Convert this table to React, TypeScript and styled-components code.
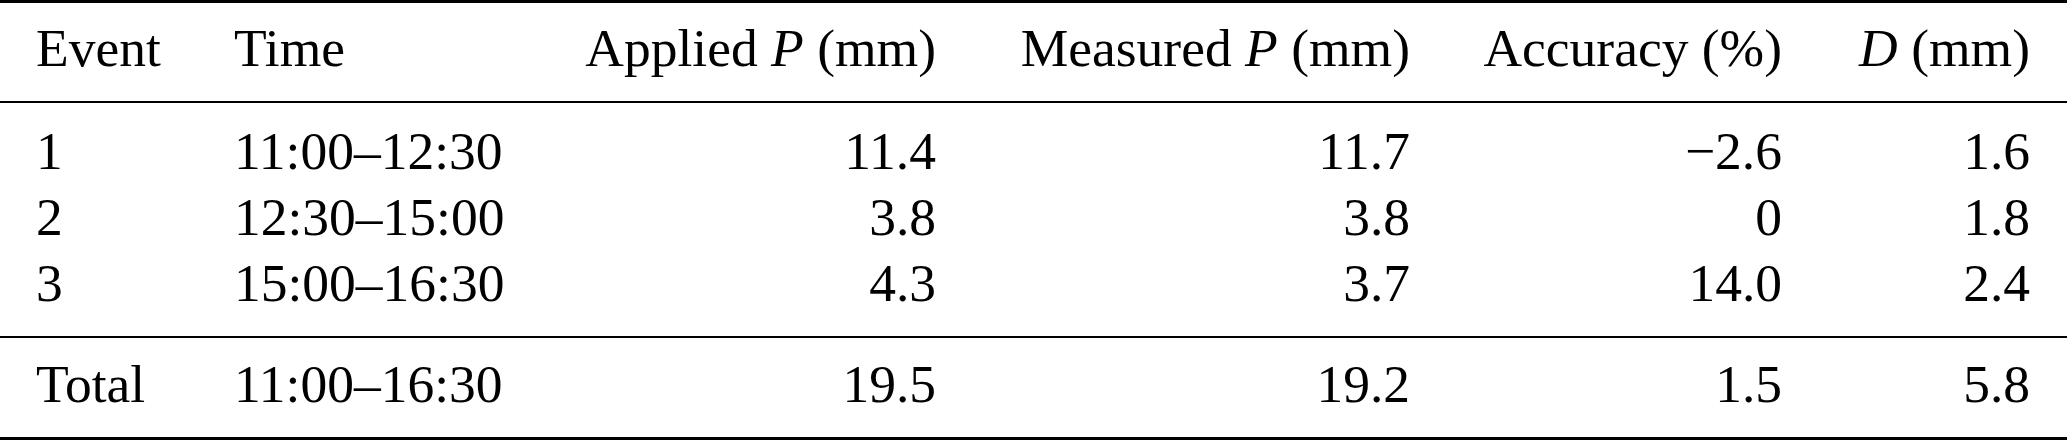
import React from "react";
import styled, { createGlobalStyle } from "styled-components";

const GlobalStyle = createGlobalStyle`
  html, body {
    margin: 0;
    padding: 0;
    background: #ffffff;
  }
  body {
    font-family: "Liberation Serif", "Times New Roman", serif;
    color: #000000;
  }
`;

const columns = "198px 300px 402px 474px 372px 248px";

const Table = styled.div`
  width: 2067px;
  display: flex;
  flex-direction: column;
  font-size: 53.5px;
  line-height: 66px;
`;

const Rule = styled.div<{ $heavy?: boolean }>`
  height: ${(p) => (p.$heavy ? 3 : 2)}px;
  background: #000000;
`;

const Section = styled.div<{ $top: number; $bottom: number }>`
  padding: ${(p) => p.$top}px 37px ${(p) => p.$bottom}px 36px;
  display: flex;
  flex-direction: column;
`;

const Row = styled.div`
  display: grid;
  grid-template-columns: ${columns};
  height: 66px;
  white-space: nowrap;
`;

const Cell = styled.div<{ $align?: "left" | "right" }>`
  text-align: ${(p) => p.$align ?? "left"};
`;

type Align = "left" | "right";
const aligns: Align[] = ["left", "left", "right", "right", "right", "right"];

const body = [
  ["1", "11:00–12:30", "11.4", "11.7", "−2.6", "1.6"],
  ["2", "12:30–15:00", "3.8", "3.8", "0", "1.8"],
  ["3", "15:00–16:30", "4.3", "3.7", "14.0", "2.4"],
];

const total = ["Total", "11:00–16:30", "19.5", "19.2", "1.5", "5.8"];

function DataRow({ values }: { values: string[] }) {
  return (
    <Row>
      {values.map((v, i) => (
        <Cell key={i} $align={aligns[i]}>
          {v}
        </Cell>
      ))}
    </Row>
  );
}

export default function App() {
  return (
    <>
      <GlobalStyle />
      <Table>
        <Rule $heavy />
        <Section $top={12} $bottom={20}>
          <Row>
            <Cell>Event</Cell>
            <Cell>Time</Cell>
            <Cell $align="right">
              Applied <i>P</i> (mm)
            </Cell>
            <Cell $align="right">
              Measured <i>P</i> (mm)
            </Cell>
            <Cell $align="right">Accuracy (%)</Cell>
            <Cell $align="right">
              <i>D</i> (mm)
            </Cell>
          </Row>
        </Section>
        <Rule />
        <Section $top={15} $bottom={20}>
          {body.map((r) => (
            <DataRow key={r[0]} values={r} />
          ))}
        </Section>
        <Rule />
        <Section $top={13} $bottom={20}>
          <DataRow values={total} />
        </Section>
        <Rule $heavy />
      </Table>
    </>
  );
}
